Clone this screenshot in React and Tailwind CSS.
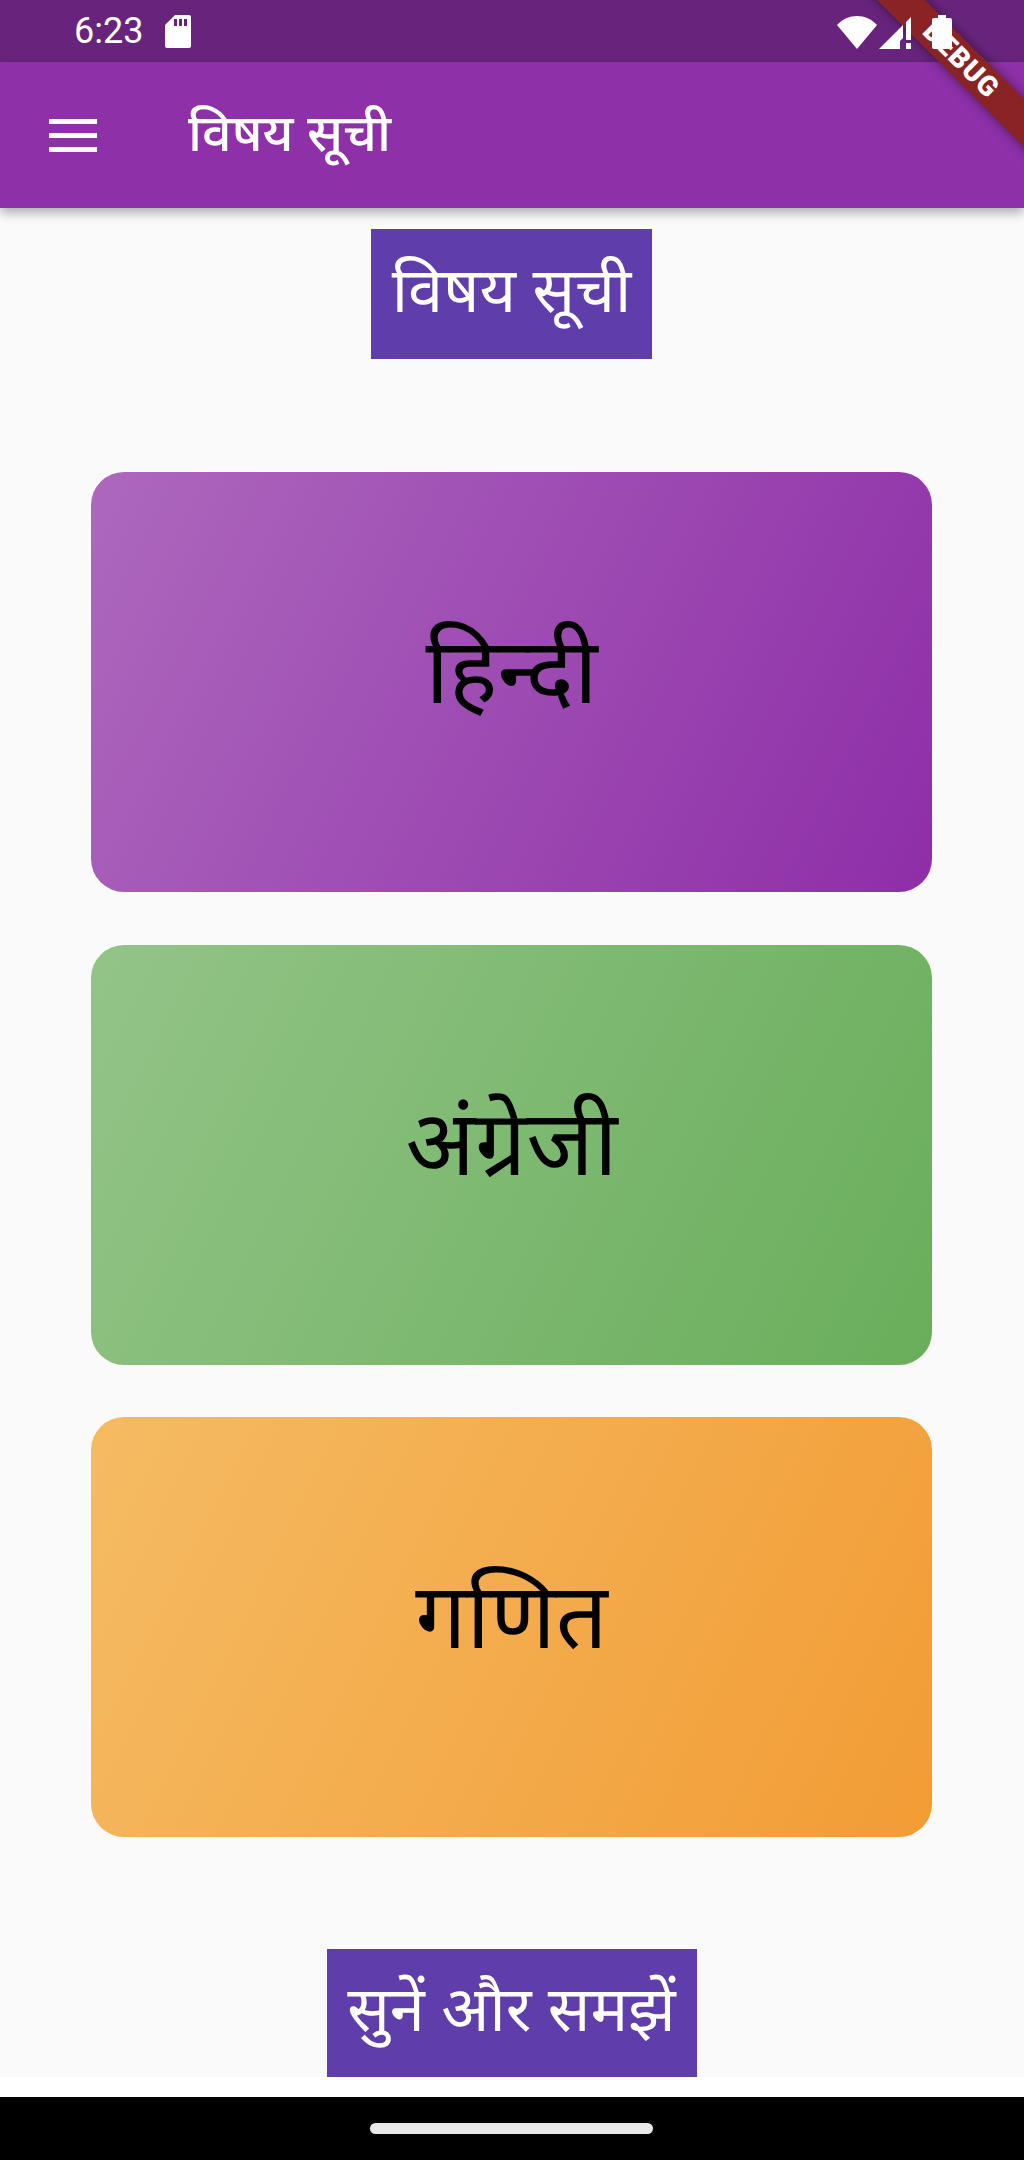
import React from "react";

const deva = { fontFamily: '"Noto Sans Devanagari","Noto Sans","Lohit Devanagari","Liberation Sans",sans-serif' };

function Card({ label, cls }) {
  return (
    <div className={`h-[420px] w-[841px] rounded-[33px] flex items-center justify-center text-black text-[91px] ${cls}`}>
      <span className="relative top-[-1px]">{label}</span>
    </div>
  );
}

export default function App() {
  return (
    <div className="relative w-[1024px] h-[2160px] overflow-hidden bg-white flex flex-col" style={deva}>
      <div className="h-[62px] bg-[#68247d] flex items-center text-white shrink-0">
        <span className="ml-[74px] text-[36px] leading-none" style={{ fontFamily: "Roboto, sans-serif" }}>6:23</span>
        <svg className="ml-[22px]" width="26" height="33" viewBox="0 0 26 33">
          <path d="M10 0h14a2 2 0 0 1 2 2v29a2 2 0 0 1-2 2H2a2 2 0 0 1-2-2V10z" fill="#fff" />
          <path d="M9 4h3v7H9zM14 4h3v7h-3zM19 4h3v7h-3z" fill="#68247d" />
        </svg>
      </div>
      <div className="h-[146px] bg-[#8e30a8] flex items-center text-white shrink-0 shadow-[0_5px_10px_rgba(0,0,0,0.3)] z-10">
        <svg className="ml-[49px]" width="48" height="33" viewBox="0 0 48 33">
          <path d="M0 0h48v5H0zM0 14h48v5H0zM0 28h48v5H0z" fill="#fff" />
        </svg>
        <span className="ml-[91px] text-[52px] font-medium leading-none relative top-[3px]">विषय सूची</span>
      </div>
      <div className="flex-1 bg-[#fafafa] flex flex-col items-center pt-[21px] pr-px">
        <div className="h-[130px] w-[281px] bg-[#5f3dab] text-white text-[63px] flex items-center justify-center whitespace-nowrap">
          <span className="relative top-[3px]">विषय सूची</span>
        </div>
        <div className="mt-[113px] flex flex-col gap-[52.5px]">
          <Card label="हिन्दी" cls="bg-linear-[116.5deg,#ad68bd,#8e2ea8]" />
          <Card label="अंग्रेजी" cls="bg-linear-[116.5deg,#93c488,#69ae5b]" />
          <Card label="गणित" cls="bg-linear-[116.5deg,#f5bb63,#f29c35]" />
        </div>
        <div className="mt-[112px] h-[128px] w-[370px] bg-[#5f3dab] text-white text-[63px] flex items-center justify-center whitespace-nowrap">
          <span className="relative top-[3px]">सुनें और समझें</span>
        </div>
      </div>
      <div className="h-[20px] bg-white shrink-0" />
      <div className="h-[63px] bg-black flex items-center justify-center shrink-0 pr-px">
        <div className="w-[283px] h-[11px] rounded-full bg-[#e8e8e8]" />
      </div>

      {/* debug banner */}
      <div
        className="absolute left-[811px] top-[43px] w-[300px] h-[34px] bg-[#8a2325] shadow-[0_0_12px_rgba(0,0,0,0.45)] text-white text-[28px] font-black flex items-center justify-center rotate-45 tracking-[1px] z-20"
        style={{ fontFamily: "Roboto, sans-serif" }}
      >
        DEBUG
      </div>

      {/* status icons */}
      <svg className="absolute left-[837px] top-[16px] z-30" width="40" height="33" viewBox="0 0 40 33">
        <path d="M0 9C11 -3 29 -3 40 9L20 33z" fill="#fff" />
      </svg>
      <svg className="absolute left-[879px] top-[17px] z-30" width="33" height="32" viewBox="0 0 33 32">
        <path d="M0 32L24 8v13l-3 3v8z" fill="#fff" />
        <path d="M27 5l5-5v23h-5zM27 26h5v6h-5z" fill="#fff" />
      </svg>
      <svg className="absolute left-[932px] top-[15px] z-30" width="20" height="34" viewBox="0 0 20 34">
        <path d="M6 0h8v3h4a2 2 0 0 1 2 2v27a2 2 0 0 1-2 2H2a2 2 0 0 1-2-2V5a2 2 0 0 1 2-2h4z" fill="#fff" />
      </svg>
    </div>
  );
}
